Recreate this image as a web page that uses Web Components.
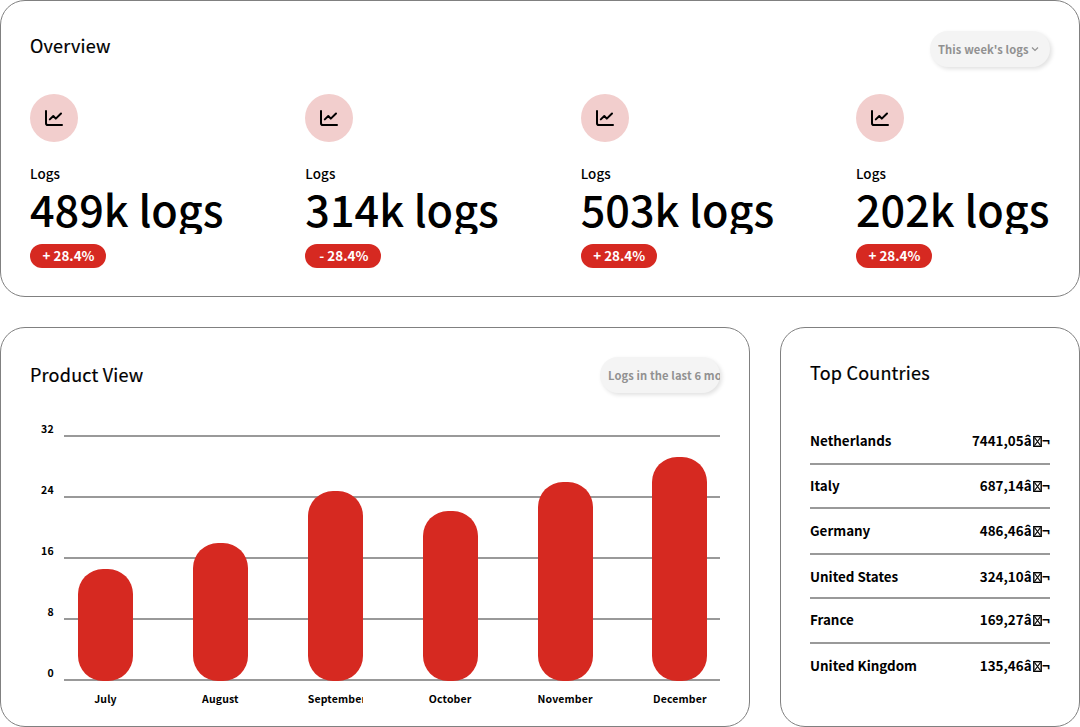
<!DOCTYPE html>
<html lang="en">
<head>
<meta charset="utf-8">
<title>Logs dashboard</title>
<style>
  html, body { margin: 0; background: #fff; }
  body { font-family: "Noto Sans CJK JP", "Noto Sans CJK SC", sans-serif; color: #000; height: 727px; overflow: hidden; }
</style>
</head>
<body>
<logs-dashboard></logs-dashboard>
<script>
function define(name, html, setup) {
  const template = document.createElement('template');
  template.innerHTML = html;
  customElements.define(name, class extends HTMLElement {
    connectedCallback() {
      if (this.shadowRoot) return;
      const root = this.attachShadow({ mode: 'open' });
      root.append(template.content.cloneNode(true));
      if (setup) setup(this, root);
    }
  });
}

define('ui-card', `
  <style>
    :host { display: flex; flex-direction: column; box-sizing: border-box; border: 1px solid #808080; border-radius: 25px; padding: 29px; min-width: 0; background: #fff; }
    ::slotted(*) { flex: none; }
  </style>
  <slot></slot>`);

define('card-title', `
  <style>
    :host { display: block; font-size: 18px; line-height: 30px; font-weight: 400; letter-spacing: .22px; -webkit-text-stroke: .2px #000; white-space: nowrap; }
  </style>
  <slot></slot>`);

define('pill-select', `
  <style>
    :host { display: block; box-sizing: border-box; width: 120px; height: 36px; padding: 0 0 0 8px; border-radius: 20px; background: #f4f4f4; color: #919191; box-shadow: 2px 2px 4px rgba(0,0,0,.12); }
    div { height: 36px; overflow: hidden; white-space: nowrap; font-size: 11.2px; letter-spacing: .1px; line-height: 36px; font-weight: 700; }
    svg { width: 8px; height: 8px; margin-left: 2px; vertical-align: 1px; }
  </style>
  <div><slot></slot><svg viewBox="0 0 8 8" fill="none" stroke="currentColor" stroke-width="1.2"><path d="M1 2.5 4 5.5 7 2.5"/></svg></div>`);

define('log-stat', `
  <style>
    :host { display: flex; flex-direction: column; align-items: flex-start; width: 194px; white-space: nowrap; }
    .icon { width: 48px; height: 48px; border-radius: 50%; background: #f2cecd; display: grid; place-items: center; }
    svg { width: 20px; height: 20px; }
    .label { margin-top: 20px; font-size: 13.4px; letter-spacing: .1px; line-height: 22px; font-weight: 500; }
    .value { height: 50px; overflow: hidden; font-size: 43.2px; line-height: 48px; font-weight: 500; }
    .badge { box-sizing: border-box; margin-top: 10px; width: 76px; height: 24px; padding-left: 1px; border-radius: 12px; background: #d62921; color: #fff; text-align: center; font-size: 13.4px; line-height: 22px; font-weight: 700; }
  </style>
  <div class="icon"><svg viewBox="0 0 20 20" fill="none" stroke="#000" stroke-width="2" stroke-linecap="round" stroke-linejoin="round"><path d="M2 3v12.2a1.8 1.8 0 0 0 1.8 1.8H18"/><path d="M5.8 11.4 9.3 8l2.5 2.6L17 5.5"/></svg></div>
  <div class="label">Logs</div>
  <div class="value"></div>
  <div class="badge"></div>`, (host, root) => {
    root.querySelector('.value').textContent = host.getAttribute('value');
    root.querySelector('.badge').textContent = host.getAttribute('change');
});

define('bar-chart', `
  <style>
    :host { display: grid; grid-template-columns: 24px 656px; column-gap: 10px; }
    .axis { display: flex; flex-direction: column; align-items: flex-end; margin-top: -8px; font-size: 10.5px; letter-spacing: .25px; font-weight: 700; }
    .axis span { height: 61px; line-height: 16px; }
    .axis span:last-child { height: 16px; }
    .plot { display: grid; grid-template-rows: 252px 28px; }
    .grid, .bars { grid-area: 1 / 1; }
    .grid { padding-top: 6px; }
    .grid i { display: block; height: 2px; margin-bottom: 59px; background: #999; }
    .grid i:last-child { margin-bottom: 0; }
    .bars, .months { display: flex; justify-content: space-between; padding: 0 12.6px 0 14px; }
    .bars { align-items: flex-end; }
    .bars b { width: 55px; border-radius: 25px; background: #d62921; }
    .months { padding-top: 9px; }
    .months span { width: 55px; overflow: hidden; white-space: nowrap; font-size: 10.5px; letter-spacing: .15px; line-height: 17px; font-weight: 700; text-align: center; height: 17px; }
  </style>
  <div class="axis"></div>
  <div class="plot"><div class="grid"></div><div class="bars"></div><div class="months"></div></div>`, (host, root) => {
    const add = (selector, tag, text, height) => {
      const el = document.createElement(tag);
      if (text) el.textContent = text;
      if (height) el.style.height = height + 'px';
      root.querySelector(selector).append(el);
    };
    for (const tick of ['32', '24', '16', '8', '0']) { add('.axis', 'span', tick); add('.grid', 'i'); }
    for (const [month, height] of [['July', 112], ['August', 138], ['September', 190], ['October', 170], ['November', 199], ['December', 224]]) {
      add('.bars', 'b', '', height);
      add('.months', 'span', month);
    }
});

define('country-row', `
  <style>
    :host { display: flex; justify-content: space-between; box-sizing: border-box; height: 45px; border-bottom: 2px solid #999; font-size: 13.4px; line-height: 40px; font-weight: 700; white-space: nowrap; }
    :host(:nth-child(2)) { height: 44px; }
    :host(:nth-child(3)) { height: 46px; line-height: 42px; }
    :host(:nth-child(4)) { height: 44px; line-height: 42px; }
    :host(:last-child) { line-height: 42px; border-bottom-color: transparent; }
    svg { width: 9px; height: 11px; margin: 0 .5px 0 1px; vertical-align: -1px; }
  </style>
  <span><slot></slot></span>
  <span><span class="amount"></span>â<svg viewBox="0 0 9 11" fill="none" stroke="#000"><rect x=".8" y=".7" width="7.4" height="9.6" stroke-width="1.4"/><path d="M1.5 1.5 7.5 9.5M7.5 1.5 1.5 9.5" stroke-width="1.2"/></svg>¬</span>`, (host, root) => {
    root.querySelector('.amount').textContent = host.getAttribute('amount');
});

define('logs-dashboard', `
  <style>
    :host { display: grid; grid-template-columns: 750px 300px; grid-template-rows: 297px 400px; gap: 30px; width: 1080px; }
    .overview { grid-column: 1 / 3; }
    header { display: flex; justify-content: space-between; align-items: flex-start; }
    .overview header { height: 64px; }
    .overview pill-select { margin-top: 1px; }
    .stats { display: flex; justify-content: space-between; }
    .product header { height: 72px; }
    .product card-title { margin-top: 2px; }
    .countries card-title { margin-bottom: 33px; }
  </style>
  <ui-card class="overview">
    <header><card-title>Overview</card-title><pill-select>This week's logs</pill-select></header>
    <div class="stats">
      <log-stat value="489k logs" change="+ 28.4%"></log-stat>
      <log-stat value="314k logs" change="- 28.4%"></log-stat>
      <log-stat value="503k logs" change="+ 28.4%"></log-stat>
      <log-stat value="202k logs" change="+ 28.4%"></log-stat>
    </div>
  </ui-card>
  <ui-card class="product">
    <header><card-title>Product View</card-title><pill-select>Logs in the last 6 months</pill-select></header>
    <bar-chart></bar-chart>
  </ui-card>
  <ui-card class="countries">
    <card-title>Top Countries</card-title>
    <div>
      <country-row amount="7441,05">Netherlands</country-row>
      <country-row amount="687,14">Italy</country-row>
      <country-row amount="486,46">Germany</country-row>
      <country-row amount="324,10">United States</country-row>
      <country-row amount="169,27">France</country-row>
      <country-row amount="135,46">United Kingdom</country-row>
    </div>
  </ui-card>`);
</script>
</body>
</html>
